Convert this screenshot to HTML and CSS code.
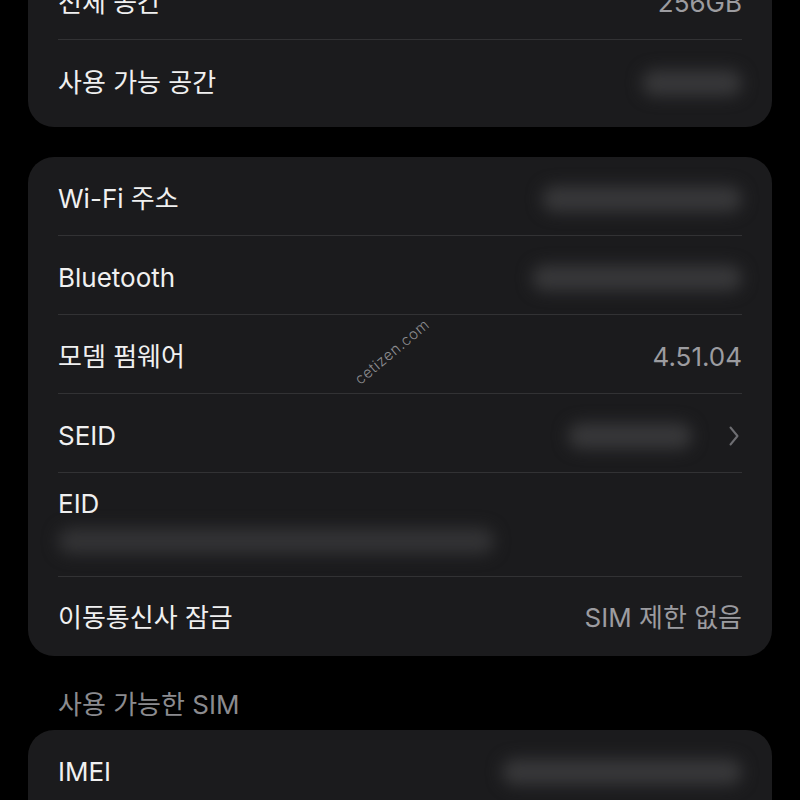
FILE: index.html
```html
<!DOCTYPE html>
<html lang="ko">
<head>
    <meta charset="UTF-8">
    <meta name="viewport" content="width=device-width, initial-scale=1.0">
    <title>정보</title>
    <link rel="stylesheet" href="styles.css">
</head>
<body>
    <div class="page">
        <div class="card card-top">
            <div class="row">
                <span class="label">전체 공간</span>
                <span class="value">256GB</span>
            </div>
            <div class="row">
                <span class="label">사용 가능 공간</span>
                <span class="blur" style="width: 100px"></span>
            </div>
        </div>

        <div class="card">
            <div class="row">
                <span class="label">Wi-Fi 주소</span>
                <span class="blur" style="width: 200px"></span>
            </div>
            <div class="row">
                <span class="label">Bluetooth</span>
                <span class="blur" style="width: 210px"></span>
            </div>
            <div class="row">
                <span class="label">모뎀 펌웨어</span>
                <span class="value">4.51.04</span>
            </div>
            <div class="row">
                <span class="label">SEID</span>
                <span class="value-group">
                    <span class="blur" style="width: 124px"></span>
                    <svg class="chevron" width="12" height="22" viewBox="0 0 12 22">
                        <path d="M2.5 2.5 L9.5 11 L2.5 19.5" fill="none" stroke="#6e6e72" stroke-width="2" stroke-linecap="round" stroke-linejoin="round"/>
                    </svg>
                </span>
            </div>
            <div class="row row-tall">
                <span class="label">EID</span>
                <span class="blur blur-wide" style="width: 436px"></span>
            </div>
            <div class="row row-end">
                <span class="label">이동통신사 잠금</span>
                <span class="value">SIM 제한 없음</span>
            </div>
        </div>

        <div class="section-title">사용 가능한 SIM</div>

        <div class="card">
            <div class="row">
                <span class="label">IMEI</span>
                <span class="blur" style="width: 240px"></span>
            </div>
            <div class="row">
                <span class="label">&nbsp;</span>
            </div>
        </div>
    </div>
    <div class="watermark">cetizen.com</div>
</body>
</html>
```

FILE: styles.css
```css
body {
    margin: 0;
    background-color: #000;
    font-family: Inter, "Noto Sans CJK KR", sans-serif;
    color: #f0f0f0;
    height: 800px;
    overflow: hidden;
    position: relative;
}
.page {
    padding: 0 28px;
}
.card {
    background-color: #1b1b1d;
    border-radius: 26px;
}
.card-top {
    margin-top: -39px;
    padding-bottom: 8px;
    margin-bottom: 30px;
}
.row {
    display: flex;
    align-items: center;
    justify-content: space-between;
    box-sizing: border-box;
    height: 79px;
    padding-top: 6px;
    margin: 0 30px;
    border-bottom: 1px solid #323234;
}
.row:last-child {
    border-bottom: none;
}
.row-end {
    padding-top: 2px;
}
.row-tall {
    height: 104px;
    padding-top: 0;
    flex-direction: column;
    align-items: flex-start;
    justify-content: flex-start;
}
.row-tall .label {
    margin-top: 15px;
}
.label {
    font-size: 26px;
    line-height: 32px;
}
.value {
    font-size: 26px;
    line-height: 32px;
    color: #9c9ca0;
}
.value-group {
    display: flex;
    align-items: center;
    gap: 36px;
}
.chevron {
    margin-right: 2px;
}
.blur {
    display: block;
    height: 26px;
    border-radius: 13px;
    background-color: #38383a;
    filter: blur(8px);
}
.blur-wide {
    margin-top: 8px;
    background-color: #333335;
}
.section-title {
    padding: 33px 30px 9px;
    font-size: 26px;
    line-height: 32px;
    color: #8b8b8f;
}
.watermark {
    position: absolute;
    left: 346px;
    top: 342px;
    font-size: 15px;
    color: #8e8e92;
    font-weight: 300;
    transform: rotate(-40deg);
    letter-spacing: 0.6px;
}
```
